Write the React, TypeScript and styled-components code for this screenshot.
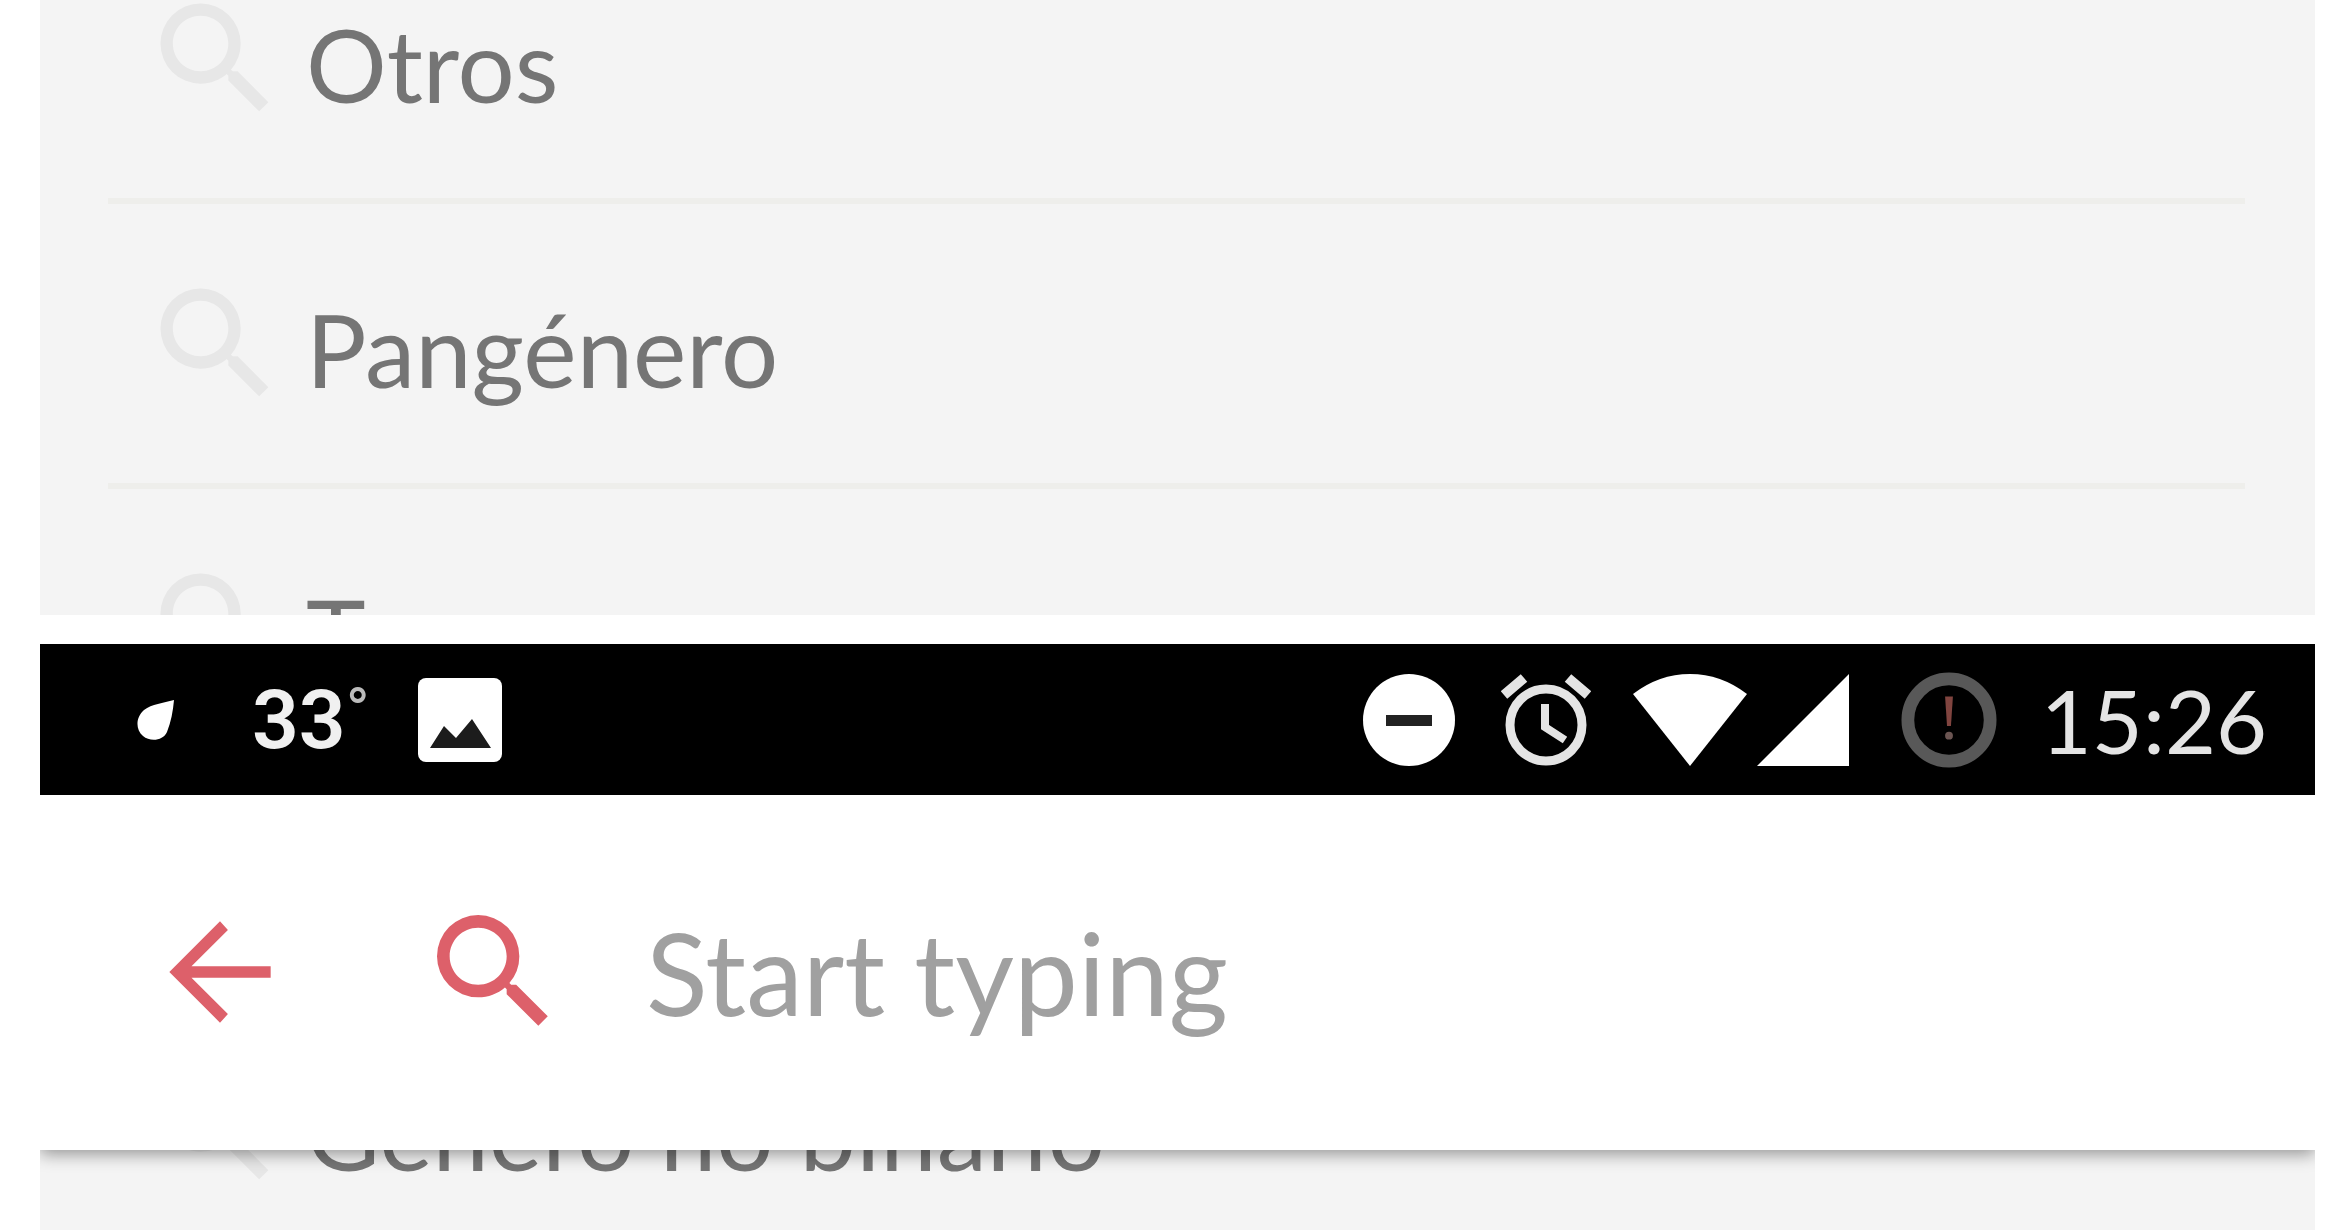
import React from "react";
import styled, { createGlobalStyle } from "styled-components";

const GlobalStyle = createGlobalStyle`
  *, *::before, *::after { box-sizing: border-box; }
  body { margin: 0; background: #fff; font-family: Lato, "Open Sans", sans-serif; }
`;

const Page = styled.main`
  display: flex;
  flex-direction: column;
  gap: 29px;
  height: 100vh;
  padding: 0 35px 0 40px;
  overflow: hidden;
`;

const Viewport = styled.section<{ $fill?: boolean }>`
  flex: ${(p) => (p.$fill ? "1 1 0" : "0 0 615px")};
  min-height: 0;
  overflow: hidden;
  background: #f4f4f4;
`;

const Screen = styled.section`
  flex: 1;
  min-height: 0;
  display: flex;
  flex-direction: column;
  overflow: hidden;
`;

const List = styled.ul<{ $scrolled: number }>`
  list-style: none;
  margin: -${(p) => p.$scrolled}px 70px 0 68px;
  padding: 0;
`;

const Item = styled.li`
  border-bottom: 6px solid #eeeeeb;
`;

const Option = styled.button`
  display: flex;
  align-items: center;
  gap: 16px;
  width: 100%;
  height: 279px;
  padding: 0 34px;
  border: 0;
  background: none;
  color: #757575;
  font: 400 101px/124px Lato, "Open Sans", sans-serif;
  text-align: left;
`;

const OptionName = styled.span`
  padding-top: 10px;
`;

const Glyph = styled.svg<{ $size: number; $color: string }>`
  display: block;
  flex: none;
  width: ${(p) => p.$size}px;
  height: ${(p) => p.$size}px;
  fill: ${(p) => p.$color};
`;

const StatusBar = styled.header`
  flex: none;
  display: flex;
  align-items: center;
  justify-content: space-between;
  height: 151px;
  padding: 0 48px 0 96px;
  background: #000;
  color: #e4e4e4;
`;

const StatusGroup = styled.div`
  display: flex;
  align-items: center;
`;

const StatusIcon = styled.svg<{ $gap: number }>`
  display: block;
  flex: none;
  margin-right: ${(p) => p.$gap}px;
`;

const Temperature = styled.div`
  display: flex;
  align-items: flex-start;
  margin-right: 48px;
`;

const Degrees = styled.span`
  color: #f0f0f0;
  font: 600 82px/100px Roboto, sans-serif;
`;

const DegreeSign = styled.span`
  color: #bbb;
  font: 400 64px/84px Roboto, sans-serif;
`;

const Clock = styled.time`
  font: 400 88px/106px Lato, sans-serif;
`;

const SearchBar = styled.form`
  position: relative;
  z-index: 1;
  flex: none;
  display: flex;
  align-items: center;
  height: 355px;
  padding: 0 104px 2px;
  background: #fff;
  box-shadow: 0 4px 16px rgba(0, 0, 0, 0.4);
`;

const BackButton = styled.button`
  margin-right: 122px;
  padding: 0;
  border: 0;
  background: none;
`;

const SearchLabel = styled.label`
  flex: 1;
  display: flex;
  align-items: center;
  gap: 76px;
`;

const SearchInput = styled.input`
  flex: 1;
  min-width: 0;
  padding: 0;
  border: 0;
  outline: 0;
  background: none;
  color: #777;
  font: 400 114px/136px Lato, "Open Sans", sans-serif;
  &::placeholder { color: #a0a0a0; opacity: 1; }
`;

const SearchGlyph = ({ size, color }: { size: number; color: string }) => (
  <Glyph $size={size} $color={color} viewBox="0 0 24 24" aria-hidden="true">
    <path d="M15.5 14h-.79l-.28-.27A6.471 6.471 0 0 0 16 9.5 6.5 6.5 0 1 0 9.5 16c1.61 0 3.09-.59 4.23-1.57l.27.28v.79l5 4.99L20.49 19l-4.99-5zm-6 0C7.01 14 5 11.99 5 9.5S7.01 5 9.5 5 14 7.01 14 9.5 11.99 14 9.5 14z" />
  </Glyph>
);

const OptionRow = ({ children }: { children: string }) => (
  <Item>
    <Option type="button">
      <SearchGlyph size={148} color="#e7e7e7" />
      <OptionName>{children}</OptionName>
    </Option>
  </Item>
);

export default function App() {
  return (
    <>
      <GlobalStyle />
      <Page>
        <Viewport>
          <List $scrolled={81}>
            {["Otros", "Pangénero", "T"].map((name) => (
              <OptionRow key={name}>{name}</OptionRow>
            ))}
          </List>
        </Viewport>

        <Screen>
          <StatusBar>
            <StatusGroup>
              <StatusIcon $gap={76} width="40" height="42" viewBox="0 0 40 42" aria-hidden="true">
                <path d="M38 1C37 12 35 23 31 33C27 42 14 43 7 37C-1 30 0 18 8 11C16 5 27 4 38 1Z" fill="#fff" />
              </StatusIcon>
              <Temperature>
                <Degrees>33</Degrees>
                <DegreeSign>°</DegreeSign>
              </Temperature>
              <StatusIcon $gap={0} width="84" height="84" viewBox="0 0 84 84" aria-hidden="true">
                <rect width="84" height="84" rx="8" fill="#fff" />
                <path d="M12 70L26 48L38 60L54 41L73 70Z" fill="#1c1c1c" />
              </StatusIcon>
            </StatusGroup>
            <StatusGroup>
              <StatusIcon $gap={46} width="92" height="92" viewBox="0 0 92 92" aria-hidden="true">
                <circle cx="46" cy="46" r="46" fill="#fff" />
                <rect x="23" y="41" width="46" height="11" fill="#222" />
              </StatusIcon>
              <StatusIcon $gap={42} width="90" height="92" viewBox="0 0 90 92" fill="none" stroke="#e4e4e4" aria-hidden="true">
                <circle cx="45" cy="51" r="36" strokeWidth="9" />
                <path d="M3 21L23 4M67 4L87 21" strokeWidth="10" />
                <path d="M44 30V53L64 66" strokeWidth="8" />
              </StatusIcon>
              <StatusIcon $gap={10} width="114" height="92" viewBox="0 0 114 92" aria-hidden="true">
                <path d="M0 20Q26 0 57 0T114 20L57 92Z" fill="#fff" />
              </StatusIcon>
              <StatusIcon $gap={52} width="92" height="92" viewBox="0 0 92 92" aria-hidden="true">
                <path d="M92 0V92H0Z" fill="#fff" />
              </StatusIcon>
              <StatusIcon $gap={44} width="96" height="96" viewBox="0 0 98 98" aria-hidden="true">
                <circle cx="49" cy="49" r="42" fill="none" stroke="#585858" strokeWidth="13" />
                <path d="M45 25H53L51 55H47Z" fill="#80443f" />
                <circle cx="49" cy="65" r="4" fill="#6b5552" />
              </StatusIcon>
              <Clock dateTime="15:26">15:26</Clock>
            </StatusGroup>
          </StatusBar>

          <SearchBar onSubmit={(e) => e.preventDefault()}>
            <BackButton type="button" aria-label="Back">
              <Glyph $size={152} $color="#dd606a" viewBox="0 0 24 24" aria-hidden="true">
                <path d="M20 11.1H7.5l5.75-5.75L12 4l-8 8 8 8 1.25-1.35L7.5 12.9H20z" />
              </Glyph>
            </BackButton>
            <SearchLabel>
              <SearchGlyph size={152} color="#dd606a" />
              <SearchInput type="text" placeholder="Start typing" aria-label="Search" />
            </SearchLabel>
          </SearchBar>

          <Viewport $fill>
            <List $scrolled={163}>
              <OptionRow>Género no binario</OptionRow>
            </List>
          </Viewport>
        </Screen>
      </Page>
    </>
  );
}
